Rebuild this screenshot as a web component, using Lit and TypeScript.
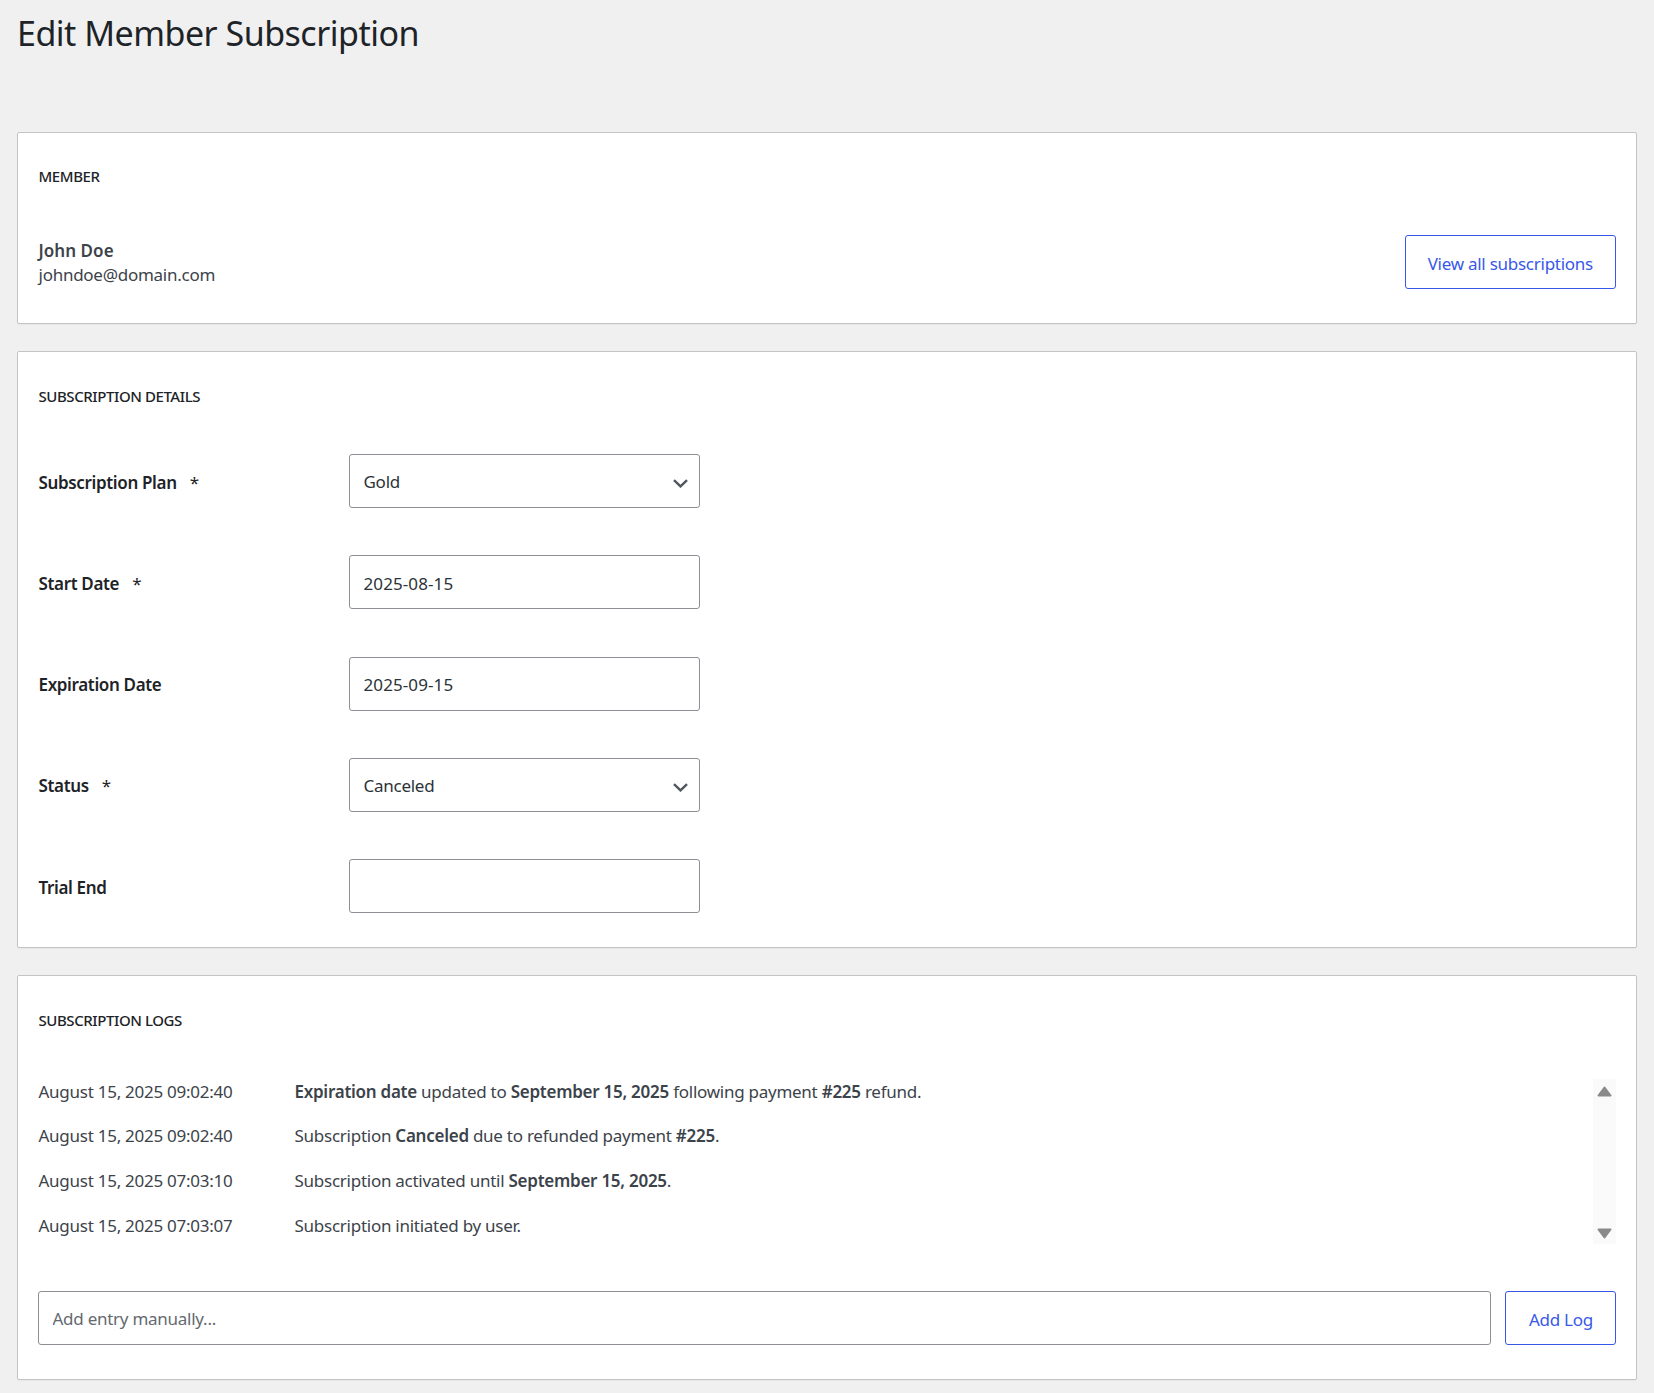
import { LitElement, html, css } from "lit";
import { customElement } from "lit/decorators.js";

const FONT = css`"Noto Sans", "Open Sans", "Liberation Sans", sans-serif`;

@customElement("app-root")
export class AppRoot extends LitElement {
  static styles = css`
    :host {
      display: block;
      min-height: 1393px;
      box-sizing: border-box;
      background: #f0f0f1;
      padding: 0 17px 13px;
      font-family: ${FONT};
      font-size: 17px;
      letter-spacing: -0.26px;
      line-height: 24px;
      color: #3c434a;
    }
    * { box-sizing: border-box; }
    h1 {
      margin: 0;
      height: 132px;
      padding-top: 10px;
      font-size: 34px;
      line-height: 46px;
      font-weight: 400;
      letter-spacing: -0.5px;
      color: #1d2327;
    }
    .card {
      background: #fff;
      border: 1px solid #c3c4c7;
      border-radius: 2px;
      box-shadow: 0 1px 1px rgba(0, 0, 0, 0.04);
      padding: 32px 20px 33.5px 20.5px;
      margin-bottom: 27.5px;
    }
    .last { padding-bottom: 34.5px; }
    h2 {
      margin: 0;
      font-size: 15px;
      line-height: 24px;
      font-weight: 500;
      letter-spacing: -0.42px;
      color: #1d2327;
    }
    .first h2 { margin-top: -1.5px; }
    .member {
      display: flex;
      justify-content: space-between;
      align-items: flex-end;
      margin-top: 47.5px;
    }
    .who { line-height: 24px; padding-bottom: 2px; }
    .who b { display: block; font-weight: 600; letter-spacing: 0.05px; }
    .btn {
      height: 54px;
      padding: 4px 22px 0 22px;
      background: #fff;
      border: 1px solid #3858e9;
      border-radius: 3px;
      color: #3858e9;
      font: inherit;
      letter-spacing: inherit;
    }
    .fields {
      display: flex;
      flex-direction: column;
      gap: 47.3px;
      margin-top: 46px;
    }
    .field { display: flex; align-items: center; }
    label {
      width: 310px;
      padding-top: 3px;
      font-weight: 600;
      letter-spacing: -0.35px;
      color: #1d2327;
    }
    label span { margin-left: 9px; font-weight: 400; }
    .control { position: relative; width: 351px; }
    input, select {
      display: block;
      width: 100%;
      height: 54px;
      padding: 2px 14px 0;
      background: #fff;
      border: 1px solid #8c8f94;
      border-radius: 3px;
      font: inherit;
      letter-spacing: inherit;
      color: #2c3338;
      appearance: none;
      outline: none;
    }
    input.date { letter-spacing: 0.1px; }
    input::placeholder { color: #646970; opacity: 1; }
    .chev {
      position: absolute;
      right: 12px;
      top: 25px;
      width: 15px;
      height: 9px;
      pointer-events: none;
    }
    .logs-wrap {
      display: flex;
      justify-content: space-between;
      margin-top: 46.5px;
    }
    .logs { display: flex; flex-direction: column; gap: 20.7px; padding-top: 1px; }
    .log { display: flex; }
    .log time { width: 256px; }
    .log b { font-weight: 600; }
    .track {
      width: 23px;
      height: 165px;
      background: #fafafa;
      display: flex;
      flex-direction: column;
      justify-content: space-between;
      align-items: center;
      padding: 7px 0 5px;
    }
    .track svg { width: 15px; height: 11px; display: block; }
    .add { display: flex; gap: 14px; margin-top: 47px; margin-left: -0.5px; }
    .add input { flex: 1; padding-left: 13.5px; }
    .add .btn { padding-left: 23px; }
  `;

  private field(name: string, required: boolean, control: unknown) {
    return html`<div class="field">
      <label>${name}${required ? html`<span> *</span>` : ""}</label>
      <div class="control">${control}</div>
    </div>`;
  }

  private select(value: string) {
    return html`<select><option>${value}</option></select>
      <svg class="chev" viewBox="0 0 15 9" fill="none" stroke="#50575e" stroke-width="2.4">
        <path d="M1 1.2 7.5 7.4 14 1.2" />
      </svg>`;
  }

  render() {
    return html`
      <h1>Edit Member Subscription</h1>
      <section class="card first">
        <h2>MEMBER</h2>
        <div class="member">
          <div class="who"><b>John Doe</b>johndoe@domain.com</div>
          <button class="btn">View all subscriptions</button>
        </div>
      </section>
      <section class="card">
        <h2>SUBSCRIPTION DETAILS</h2>
        <div class="fields">
          ${this.field("Subscription Plan", true, this.select("Gold"))}
          ${this.field("Start Date", true, html`<input class="date" .value=${"2025-08-15"} />`)}
          ${this.field("Expiration Date", false, html`<input class="date" .value=${"2025-09-15"} />`)}
          ${this.field("Status", true, this.select("Canceled"))}
          ${this.field("Trial End", false, html`<input />`)}
        </div>
      </section>
      <section class="card last">
        <h2>SUBSCRIPTION LOGS</h2>
        <div class="logs-wrap">
          <div class="logs">
            <div class="log"><time>August 15, 2025 09:02:40</time><div><b>Expiration date</b> updated to <b>September 15, 2025</b> following payment <b>#225</b> refund.</div></div>
            <div class="log"><time>August 15, 2025 09:02:40</time><div>Subscription <b>Canceled</b> due to refunded payment <b>#225</b>.</div></div>
            <div class="log"><time>August 15, 2025 07:03:10</time><div>Subscription activated until <b>September 15, 2025</b>.</div></div>
            <div class="log"><time>August 15, 2025 07:03:07</time><div>Subscription initiated by user.</div></div>
          </div>
          <div class="track">
            <svg viewBox="0 0 15 11"><path d="M7.5 1.5 13.5 9.5H1.5Z" fill="#8a8a8a" stroke="#8a8a8a" stroke-width="2" stroke-linejoin="round" /></svg>
            <svg viewBox="0 0 15 11"><path d="M1.5 1.5H13.5L7.5 9.5Z" fill="#8a8a8a" stroke="#8a8a8a" stroke-width="2" stroke-linejoin="round" /></svg>
          </div>
        </div>
        <div class="add">
          <input placeholder="Add entry manually..." />
          <button class="btn">Add Log</button>
        </div>
      </section>
    `;
  }
}
